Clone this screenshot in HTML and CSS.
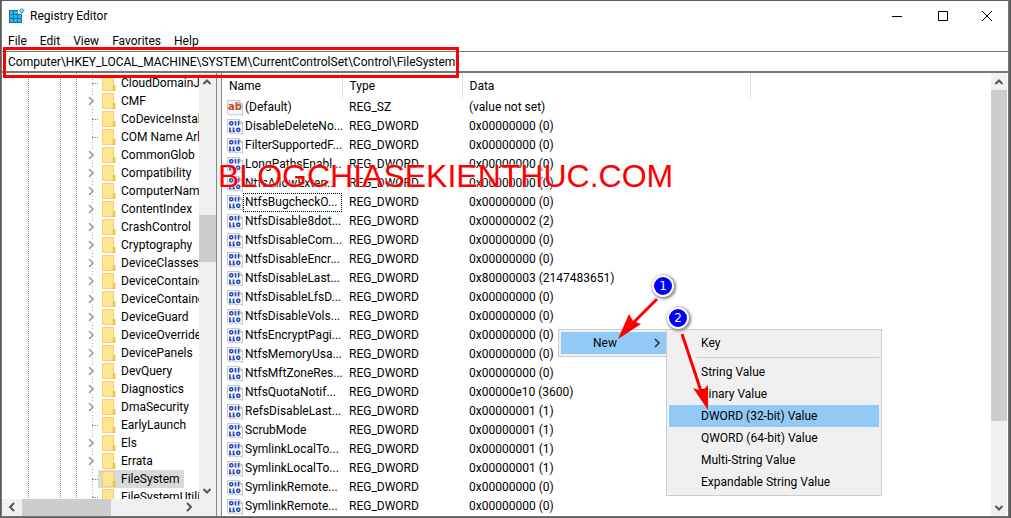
FILE: index.html
```
<!DOCTYPE html>
<html lang="en">
<head>
<meta charset="utf-8">
<title>Registry Editor</title>
<link rel="stylesheet" href="styles.css">
</head>
<body>
<svg class="defs" aria-hidden="true">
  <symbol id="folder" viewBox="0 0 14 18">
    <path d="M.5 1.500h11v15H.5z" fill="#ffe58f" stroke="#f0d070"/>
    <path d="M11.500 11.500h1.500v5h-2z" fill="#ffdf78" stroke="#e3ba4c"/>
  </symbol>
  <symbol id="bin" viewBox="0 0 16 16">
    <path d="M.5.5h11.500l3.500 3.500v11.500l-3-1.500-3 1-3-1-3 1-3-1.500z" fill="#f7f8fb" stroke="#c4c8d0"/>
    <path d="M12 .5v3.500h3.500" fill="none" stroke="#9a9fa8"/>
    <g fill="none" stroke="#2547bd" stroke-width="1.600"><rect x="2.800" y="2.800" width="2.900" height="3" rx="1"/><path d="M8.500 2v4.500M11.500 2v4.500M3 8.500v4.500M6.500 8.500v4.500M2 12.500h2.500M5.500 12.500h2.500"/><rect x="9.800" y="9.300" width="2.900" height="3" rx="1"/></g>
  </symbol>
  <symbol id="str" viewBox="0 0 16 16">
    <path d="M.5.5h11.500l3.500 3.500v11.500l-3-1.500-3 1-3-1-3 1-3-1.500z" fill="#f7f8fb" stroke="#c4c8d0"/>
    <path d="M12 .5v3.500h3.500" fill="none" stroke="#9a9fa8"/>
    <text x="1" y="10" class="ab">ab</text>
  </symbol>
  <symbol id="right" viewBox="0 0 8 10"><path d="M2 1l4 4-4 4" fill="none" stroke="currentColor" stroke-width="1.600"/></symbol>
  <symbol id="left" viewBox="0 0 8 10"><path d="M6 1L2 5l4 4" fill="none" stroke="currentColor" stroke-width="2"/></symbol>
  <symbol id="next" viewBox="0 0 8 10"><path d="M2 1l4 4-4 4" fill="none" stroke="currentColor" stroke-width="2"/></symbol>
  <symbol id="up" viewBox="0 0 10 8"><path d="M1.500 6L5 2.500 8.500 6" fill="none" stroke="currentColor" stroke-width="2"/></symbol>
  <symbol id="down" viewBox="0 0 10 8"><path d="M1.500 2L5 5.500 8.500 2" fill="none" stroke="currentColor" stroke-width="2"/></symbol>
</svg>

<div class="window">
  <header class="titlebar">
    <svg class="app-icon" viewBox="0 0 16 16">
      <path d="M0 2h9v4h4v9H0z" fill="#0b76ae"/>
      <path d="M1 3h3v3H1zM5 3h4v3H5zM1 7h3v3H1zM5 7h3v3H5zM9 7h3v3H9zM1 11h3v3H1zM5 11h3v3H5zM9 11h3v3H9z" fill="#35b5e8"/>
      <path d="M12.500.500l2.500 2-2 2.500-2.500-2z" fill="#a9e2f8" stroke="#1687bd"/>
    </svg>
    <h1 class="title">Registry Editor</h1>
    <button class="caption" aria-label="Minimize"><svg viewBox="0 0 10 10"><path d="M0 5.500h10" stroke="#000"/></svg></button>
    <button class="caption" aria-label="Maximize"><svg viewBox="0 0 10 10"><path d="M.5.5h9v9h-9z" fill="none" stroke="#000"/></svg></button>
    <button class="caption close" aria-label="Close"><svg viewBox="0 0 10 10"><path d="M0 0l10 10M10 0L0 10" stroke="#000"/></svg></button>
  </header>
  <nav class="menubar">
    <button>File</button><button>Edit</button><button>View</button><button>Favorites</button><button>Help</button>
  </nav>
  <div class="address">
    <input aria-label="Address" value="Computer\HKEY_LOCAL_MACHINE\SYSTEM\CurrentControlSet\Control\FileSystem">
    <div class="address-mark"></div>
  </div>
  <main class="panes">
    <section class="tree-pane">
      <ul class="tree">
        <li class="leaf"><svg class="folder"><use href="#folder"/></svg><span>CloudDomainJoin</span></li>
        <li><svg class="exp"><use href="#right"/></svg><svg class="folder"><use href="#folder"/></svg><span>CMF</span></li>
        <li class="leaf"><svg class="folder"><use href="#folder"/></svg><span>CoDeviceInstallers</span></li>
        <li class="leaf"><svg class="folder"><use href="#folder"/></svg><span>COM Name Arbiter</span></li>
        <li><svg class="exp"><use href="#right"/></svg><svg class="folder"><use href="#folder"/></svg><span>CommonGlob</span></li>
        <li><svg class="exp"><use href="#right"/></svg><svg class="folder"><use href="#folder"/></svg><span>Compatibility</span></li>
        <li><svg class="exp"><use href="#right"/></svg><svg class="folder"><use href="#folder"/></svg><span>ComputerName</span></li>
        <li><svg class="exp"><use href="#right"/></svg><svg class="folder"><use href="#folder"/></svg><span>ContentIndex</span></li>
        <li><svg class="exp"><use href="#right"/></svg><svg class="folder"><use href="#folder"/></svg><span>CrashControl</span></li>
        <li><svg class="exp"><use href="#right"/></svg><svg class="folder"><use href="#folder"/></svg><span>Cryptography</span></li>
        <li><svg class="exp"><use href="#right"/></svg><svg class="folder"><use href="#folder"/></svg><span>DeviceClasses</span></li>
        <li><svg class="exp"><use href="#right"/></svg><svg class="folder"><use href="#folder"/></svg><span>DeviceContainers</span></li>
        <li><svg class="exp"><use href="#right"/></svg><svg class="folder"><use href="#folder"/></svg><span>DeviceContainers</span></li>
        <li><svg class="exp"><use href="#right"/></svg><svg class="folder"><use href="#folder"/></svg><span>DeviceGuard</span></li>
        <li><svg class="exp"><use href="#right"/></svg><svg class="folder"><use href="#folder"/></svg><span>DeviceOverrides</span></li>
        <li><svg class="exp"><use href="#right"/></svg><svg class="folder"><use href="#folder"/></svg><span>DevicePanels</span></li>
        <li><svg class="exp"><use href="#right"/></svg><svg class="folder"><use href="#folder"/></svg><span>DevQuery</span></li>
        <li><svg class="exp"><use href="#right"/></svg><svg class="folder"><use href="#folder"/></svg><span>Diagnostics</span></li>
        <li><svg class="exp"><use href="#right"/></svg><svg class="folder"><use href="#folder"/></svg><span>DmaSecurity</span></li>
        <li class="leaf"><svg class="folder"><use href="#folder"/></svg><span>EarlyLaunch</span></li>
        <li><svg class="exp"><use href="#right"/></svg><svg class="folder"><use href="#folder"/></svg><span>Els</span></li>
        <li><svg class="exp"><use href="#right"/></svg><svg class="folder"><use href="#folder"/></svg><span>Errata</span></li>
        <li class="leaf selected"><svg class="folder"><use href="#folder"/></svg><span>FileSystem</span></li>
        <li class="leaf"><svg class="folder"><use href="#folder"/></svg><span>FileSystemUtilities</span></li>
      </ul>
      <div class="vbar">
        <svg class="arrow-v"><use href="#up"/></svg>
        <div class="track tree-track"><div class="thumb"></div></div>
        <svg class="arrow-v"><use href="#down"/></svg>
      </div>
      <div class="hbar">
        <svg class="arrow-h"><use href="#left"/></svg>
        <div class="htrack"><div class="thumb"></div></div>
        <svg class="arrow-h"><use href="#next"/></svg>
      </div>
      <div class="corner"></div>
    </section>
    <section class="list-pane">
      <div class="list">
      <table>
        <colgroup><col class="c-name"><col class="c-type"><col class="c-data"><col></colgroup>
        <thead><tr><th>Name</th><th>Type</th><th>Data</th><td></td></tr></thead>
        <tbody>
        <tr><td><div class="name"><svg><use href="#str"/></svg><span>(Default)</span></div></td><td>REG_SZ</td><td>(value not set)</td></tr>
        <tr><td><div class="name"><svg><use href="#bin"/></svg><span>DisableDeleteNo...</span></div></td><td>REG_DWORD</td><td>0x00000000 (0)</td></tr>
        <tr><td><div class="name"><svg><use href="#bin"/></svg><span>FilterSupportedF...</span></div></td><td>REG_DWORD</td><td>0x00000000 (0)</td></tr>
        <tr><td><div class="name"><svg><use href="#bin"/></svg><span>LongPathsEnabl...</span></div></td><td>REG_DWORD</td><td>0x00000000 (0)</td></tr>
        <tr><td><div class="name"><svg><use href="#bin"/></svg><span>NtfsAllowExten...</span></div></td><td>REG_DWORD</td><td>0x00000000 (0)</td></tr>
        <tr><td><div class="name focused"><svg><use href="#bin"/></svg><span>NtfsBugcheckO...</span></div></td><td>REG_DWORD</td><td>0x00000000 (0)</td></tr>
        <tr><td><div class="name"><svg><use href="#bin"/></svg><span>NtfsDisable8dot...</span></div></td><td>REG_DWORD</td><td>0x00000002 (2)</td></tr>
        <tr><td><div class="name"><svg><use href="#bin"/></svg><span>NtfsDisableCom...</span></div></td><td>REG_DWORD</td><td>0x00000000 (0)</td></tr>
        <tr><td><div class="name"><svg><use href="#bin"/></svg><span>NtfsDisableEncr...</span></div></td><td>REG_DWORD</td><td>0x00000000 (0)</td></tr>
        <tr><td><div class="name"><svg><use href="#bin"/></svg><span>NtfsDisableLast...</span></div></td><td>REG_DWORD</td><td>0x80000003 (2147483651)</td></tr>
        <tr><td><div class="name"><svg><use href="#bin"/></svg><span>NtfsDisableLfsD...</span></div></td><td>REG_DWORD</td><td>0x00000000 (0)</td></tr>
        <tr><td><div class="name"><svg><use href="#bin"/></svg><span>NtfsDisableVols...</span></div></td><td>REG_DWORD</td><td>0x00000000 (0)</td></tr>
        <tr><td><div class="name"><svg><use href="#bin"/></svg><span>NtfsEncryptPagi...</span></div></td><td>REG_DWORD</td><td>0x00000000 (0)</td></tr>
        <tr><td><div class="name"><svg><use href="#bin"/></svg><span>NtfsMemoryUsa...</span></div></td><td>REG_DWORD</td><td>0x00000000 (0)</td></tr>
        <tr><td><div class="name"><svg><use href="#bin"/></svg><span>NtfsMftZoneRes...</span></div></td><td>REG_DWORD</td><td>0x00000000 (0)</td></tr>
        <tr><td><div class="name"><svg><use href="#bin"/></svg><span>NtfsQuotaNotif...</span></div></td><td>REG_DWORD</td><td>0x00000e10 (3600)</td></tr>
        <tr><td><div class="name"><svg><use href="#bin"/></svg><span>RefsDisableLast...</span></div></td><td>REG_DWORD</td><td>0x00000001 (1)</td></tr>
        <tr><td><div class="name"><svg><use href="#bin"/></svg><span>ScrubMode</span></div></td><td>REG_DWORD</td><td>0x00000001 (1)</td></tr>
        <tr><td><div class="name"><svg><use href="#bin"/></svg><span>SymlinkLocalTo...</span></div></td><td>REG_DWORD</td><td>0x00000001 (1)</td></tr>
        <tr><td><div class="name"><svg><use href="#bin"/></svg><span>SymlinkLocalTo...</span></div></td><td>REG_DWORD</td><td>0x00000001 (1)</td></tr>
        <tr><td><div class="name"><svg><use href="#bin"/></svg><span>SymlinkRemote...</span></div></td><td>REG_DWORD</td><td>0x00000000 (0)</td></tr>
        <tr><td><div class="name"><svg><use href="#bin"/></svg><span>SymlinkRemote...</span></div></td><td>REG_DWORD</td><td>0x00000000 (0)</td></tr>
        </tbody>
      </table>
      </div>
      <div class="vbar">
        <svg class="arrow-v"><use href="#up"/></svg>
        <div class="track list-track"><div class="thumb"></div></div>
        <svg class="arrow-v"><use href="#down"/></svg>
      </div>
    </section>
  </main>
</div>

<div class="menu context">
  <button class="active">New<svg><use href="#right"/></svg></button>
</div>
<div class="menu submenu">
  <button>Key</button>
  <hr>
  <button>String Value</button>
  <button>Binary Value</button>
  <button class="active">DWORD (32-bit) Value</button>
  <button>QWORD (64-bit) Value</button>
  <button>Multi-String Value</button>
  <button>Expandable String Value</button>
</div>

<div class="watermark">BLOGCHIASEKIENTHUC.COM</div>

<svg class="arrows" viewBox="0 0 120 160" aria-hidden="true">
  <g stroke="#f00" stroke-width="3"><path d="M57 29L31 55"/><path d="M82 64L103 127"/></g>
  <path d="M18 69L29 44l4 7 8 3zM108 140L93 118l9 3 6-6z" fill="#f00"/>
</svg>
<span class="step step-one">1</span>
<span class="step step-two">2</span>
</body>
</html>
```
FILE: styles.css
```
* { box-sizing: border-box; }

body {
  margin: 0;
  height: 100vh;
  padding: 1px 2px 1px 1px;
  overflow: hidden;
  position: relative;
  background: #5d5a5e;
  color: #000;
  font: 12px/18px Roboto, "Open Sans", sans-serif;
}

button, input {
  font: inherit;
  color: inherit;
  border: 0;
  margin: 0;
  padding: 0;
  background: none;
}

.defs { position: absolute; width: 0; height: 0; }
.ab { font: bold 10px "DejaVu Sans", sans-serif; fill: #c8452a; }

.window {
  height: 100%;
  display: flex;
  flex-direction: column;
  background: #fff;
  border: solid #777;
  border-width: 0 1px 1px;
}

.titlebar { display: flex; align-items: center; height: 30px; padding-left: 7px; }
.app-icon { width: 16px; height: 16px; }
.title { flex: 1; margin: 0 0 0 5px; font-size: 12px; font-weight: 400; }
.caption { width: 46px; height: 28px; display: grid; place-items: center; }
.caption.close { width: 42px; }
.caption svg { width: 10px; height: 10px; }

.menubar { display: flex; height: 20px; }
.menubar button { padding: 0 7px 0 6px; }

.address {
  position: relative;
  height: 22px;
  border: solid #777;
  border-width: 1px 0 2px;
}
.address input { display: block; width: 100%; height: 19px; padding-left: 6px; outline: 0; }
.address-mark {
  position: absolute;
  left: 1px;
  top: -5px;
  width: 456px;
  height: 31px;
  border: 3px solid #f00;
}

.panes {
  flex: 1;
  min-height: 0;
  display: grid;
  grid-template-columns: 215px 1fr;
  gap: 4px;
  background: #f0f0f0;
}

.tree-pane {
  display: grid;
  grid-template: minmax(0, 1fr) 17px / minmax(0, 1fr) 17px;
  border-right: 1px solid #828790;
  background: #fff;
  min-height: 0;
}
.tree {
  margin: 0;
  padding: 1px 0 0;
  list-style: none;
  overflow: hidden;
  background:
    repeating-linear-gradient(#888 0 1px, transparent 1px 2px) 26px 0 / 1px 100% no-repeat,
    repeating-linear-gradient(#888 0 1px, transparent 1px 2px) 58px 0 / 1px 100% no-repeat,
    repeating-linear-gradient(#888 0 1px, transparent 1px 2px) 74px 0 / 1px 100% no-repeat,
    repeating-linear-gradient(#aaa 0 1px, transparent 1px 3px) 90px 0 / 1px 100% no-repeat;
}
.tree li { display: flex; align-items: center; height: 18px; padding-left: 85px; }
.tree .leaf::before { content: ""; flex: none; width: 6px; margin-left: 5px; border-top: 1px dotted #888; }
.exp { width: 8px; height: 10px; margin-right: 3px; color: #999; background: #fff; flex: none; }
.tree span { white-space: nowrap; padding: 0 4px 0 5px; }
.folder { width: 18px; height: 18px; padding-left: 4px; flex: none; }
.selected .folder, .selected span { background: #d9d9d9; }

.vbar { display: flex; flex-direction: column; background: #f0f0f0; }
.hbar { display: flex; background: #f0f0f0; }
.corner { background: #f0f0f0; }
.arrow-v { width: 10px; height: 8px; margin: 5px 3px 4px; color: #555; flex: none; }
.arrow-h { width: 8px; height: 10px; margin: 3px 6px; color: #555; flex: none; }
.track { flex: 1; display: grid; }
.tree-track { grid-template-rows: 32% 12% 1fr; }
.list-track { grid-template-rows: 81% 1fr; }
.thumb { background: #cdcdcd; }
.tree-track .thumb { grid-row: 2; }
.htrack { flex: 1; display: grid; grid-template-columns: 57% 1fr; }

.list-pane {
  display: grid;
  grid-template-columns: minmax(0, 1fr) 16px;
  padding-right: 1px;
  border-left: 1px solid #828790;
  background: #fff;
  min-height: 0;
}
.list { overflow: hidden; }
table { width: 100%; table-layout: fixed; border-collapse: collapse; }
.c-name, .c-type { width: 120px; }
.c-data { width: 288px; }
th, td { padding: 0 0 0 7px; text-align: left; font-weight: 400; white-space: nowrap; }
thead tr { height: 25px; }
th { border-right: 1px solid #e2e2e2; }
tbody tr { height: 19px; }
tbody td { line-height: 19px; }
tbody td:first-child { padding-left: 5px; }
.name { display: flex; align-items: center; height: 19px; }
.name svg { width: 16px; height: 16px; flex: none; }
.name span { padding-left: 2px; }
.focused span { flex: 1; outline: 1px dotted #000; outline-offset: -1px; }

.menu {
  position: absolute;
  padding: 2px;
  display: flex;
  flex-direction: column;
  background: #f0f0f0;
  border: 1px solid #ccc;
}
.menu button { display: flex; align-items: center; height: 22px; padding: 0 6px 0 32px; }
.menu .active { background: #91c9f7; }
.menu svg { width: 8px; height: 10px; margin-left: auto; color: #333; }
.menu hr { width: auto; margin: 3px 0 3px 28px; border: 0; border-top: 1px solid #ccc; align-self: stretch; }
.context { left: 558px; top: 329px; width: 112px; }
.submenu { left: 666px; top: 329px; width: 216px; }

.watermark {
  position: absolute;
  left: 218px;
  top: 158px;
  font: 32px/36px "Liberation Sans", Arial, sans-serif;
  color: #f00;
  text-shadow: 0 0 2px #fff;
}

.arrows { position: absolute; left: 600px; top: 270px; width: 120px; height: 160px; }
.step {
  position: absolute;
  width: 22px;
  height: 22px;
  border: 2px solid #fff;
  border-radius: 50%;
  background: #00f;
  box-shadow: 1px 1px 3px 1px #888;
  color: #fff;
  font: 12px/18px "DejaVu Sans", sans-serif;
  text-align: center;
}
.step-one { left: 652px; top: 275px; }
.step-two { left: 667px; top: 307px; }
```
